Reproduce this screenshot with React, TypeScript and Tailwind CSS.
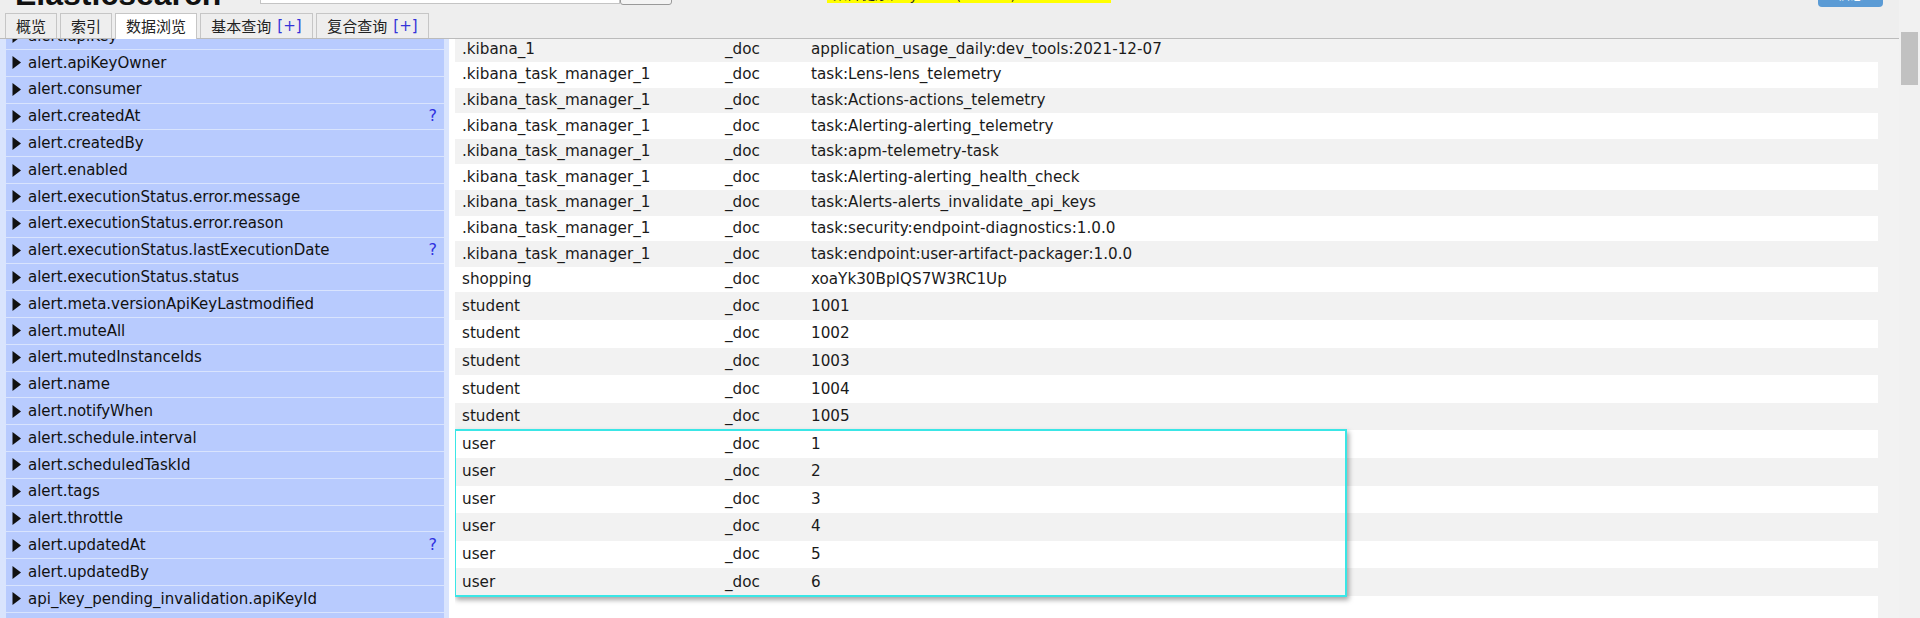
import React from 'react';

const sideFont = { fontFamily: '"DejaVu Sans", Verdana, sans-serif' };
const tableFont = { fontFamily: '"DejaVu Sans", Tahoma, sans-serif' };
const cjkFont = { fontFamily: '"Noto Sans CJK SC", "Noto Sans", sans-serif' };

const fields: { name: string; help?: boolean }[] = [
  { name: 'alert.apiKey' },
  { name: 'alert.apiKeyOwner' },
  { name: 'alert.consumer' },
  { name: 'alert.createdAt', help: true },
  { name: 'alert.createdBy' },
  { name: 'alert.enabled' },
  { name: 'alert.executionStatus.error.message' },
  { name: 'alert.executionStatus.error.reason' },
  { name: 'alert.executionStatus.lastExecutionDate', help: true },
  { name: 'alert.executionStatus.status' },
  { name: 'alert.meta.versionApiKeyLastmodified' },
  { name: 'alert.muteAll' },
  { name: 'alert.mutedInstanceIds' },
  { name: 'alert.name' },
  { name: 'alert.notifyWhen' },
  { name: 'alert.schedule.interval' },
  { name: 'alert.scheduledTaskId' },
  { name: 'alert.tags' },
  { name: 'alert.throttle' },
  { name: 'alert.updatedAt', help: true },
  { name: 'alert.updatedBy' },
  { name: 'api_key_pending_invalidation.apiKeyId' },
  { name: 'api_key_pending_invalidation.createdAt', help: true },
];

const docs: [string, string][] = [
  ['.kibana_1', 'application_usage_daily:dev_tools:2021-12-07'],
  ['.kibana_task_manager_1', 'task:Lens-lens_telemetry'],
  ['.kibana_task_manager_1', 'task:Actions-actions_telemetry'],
  ['.kibana_task_manager_1', 'task:Alerting-alerting_telemetry'],
  ['.kibana_task_manager_1', 'task:apm-telemetry-task'],
  ['.kibana_task_manager_1', 'task:Alerting-alerting_health_check'],
  ['.kibana_task_manager_1', 'task:Alerts-alerts_invalidate_api_keys'],
  ['.kibana_task_manager_1', 'task:security:endpoint-diagnostics:1.0.0'],
  ['.kibana_task_manager_1', 'task:endpoint:user-artifact-packager:1.0.0'],
  ['shopping', 'xoaYk30BpIQS7W3RC1Up'],
  ['student', '1001'],
  ['student', '1002'],
  ['student', '1003'],
  ['student', '1004'],
  ['student', '1005'],
  ['user', '1'],
  ['user', '2'],
  ['user', '3'],
  ['user', '4'],
  ['user', '5'],
  ['user', '6'],
];

function Tab({ label, plus, active, width }: { label: string; plus?: boolean; active?: boolean; width: string }) {
  return (
    <div
      className={`${width} flex items-center justify-center border border-b-0 border-[#c6c6c6] text-[15px] text-[#222] ${
        active ? 'bg-white h-[26px] -mb-px' : 'bg-[#eeeeee] h-[25px]'
      }`}
      style={cjkFont}
    >
      <span>{label}</span>
      {plus && (
        <span className="ml-[6px] text-[#3434d8]" style={sideFont}>
          [+]
        </span>
      )}
    </div>
  );
}

function Arrow() {
  return (
    <svg width="9" height="13" viewBox="0 0 9 13" className="shrink-0">
      <polygon points="0.5,0 9,6.5 0.5,13" fill="#111" />
    </svg>
  );
}

export default function App() {
  return (
    <div className="flex h-screen w-full overflow-hidden bg-white">
      <div className="flex flex-1 flex-col min-w-0">
        {/* Header */}
        <header className="h-[39px] shrink-0 bg-[#eeeeee] border-b border-[#bbbbbb]">
          <div className="flex h-[13px] items-start">
            <div className="w-[260px] pl-[15px] mt-[-22px] text-[32px] font-bold leading-none text-[#111]" style={{ fontFamily: '"Liberation Sans", Arial, sans-serif' }}>
              Elasticsearch
            </div>
            <div className="w-[360px] h-[24px] mt-[-20px] bg-white border border-[#c4c4c4] px-[22px] text-[13px] leading-[22px] text-[#333]" style={sideFont}>
              http://localhost:9200/
            </div>
            <div className="w-[52px] h-[24px] mt-[-19px] bg-[#f4f4f4] border border-[#9a9a9a] rounded-[3px]" />
            <div className="w-[155px]" />
            <div className="w-[284px] h-[20px] mt-[-17px] bg-[#ffff00] text-[14px] leading-[20px] px-[6px] text-[#222] overflow-hidden" style={cjkFont}>
              集群健康值: yellow (21 of 42)
            </div>
            <div className="flex-1" />
            <div className="w-[65px] h-[24px] mt-[-17px] bg-[#5b9bd5] rounded-[4px] text-white text-[13px] text-center leading-[22px]" style={cjkFont}>
              信息
            </div>
            <div className="w-[16px]" />
          </div>
          <div className="flex items-start gap-[3px] pl-[5px]">
            <Tab label="概览" width="w-[52px]" />
            <Tab label="索引" width="w-[52px]" />
            <Tab label="数据浏览" width="w-[82px]" active />
            <Tab label="基本查询" plus width="w-[113px]" />
            <Tab label="复合查询" plus width="w-[113px]" />
          </div>
        </header>

        <div className="flex flex-1 min-h-0">
          {/* Field sidebar */}
          <aside className="w-[449px] shrink-0 overflow-hidden bg-[#d9e4fd]" style={sideFont}>
            <div className="mt-[-16.8px]">
              {fields.map((f) => (
                <div key={f.name} className="mt-px ml-[6px] mr-[5px] h-[25.8px] flex items-center bg-[#b8cbfe] pl-[6px] pr-[7px] text-[15px] text-[#111]">
                  <Arrow />
                  <span className="ml-[7px] flex-1 whitespace-nowrap">{f.name}</span>
                  {f.help && <span className="text-[#2f2fe0] text-[16px]">?</span>}
                </div>
              ))}
            </div>
          </aside>

          <div className="w-[6px] shrink-0 bg-white" />

          {/* Results */}
          <main className="relative flex flex-1 min-w-0 overflow-hidden">
            <div className="flex-1 bg-white overflow-hidden" style={tableFont}>
              <div className="mt-[-2.6px]">
                {docs.map(([index, id], i) => (
                  <div
                    key={i}
                    className={`flex items-center text-[15.2px] text-[#1a1a1a] ${i < 10 ? 'h-[25.6px]' : 'h-[27.6px]'} ${
                      i % 2 === 0 ? 'bg-[#f2f2f2]' : 'bg-white'
                    }`}
                  >
                    <div className="w-[270px] pl-[7px] whitespace-nowrap">{index}</div>
                    <div className="w-[86px]">_doc</div>
                    <div className="flex-1 whitespace-nowrap">{id}</div>
                  </div>
                ))}
              </div>
            </div>
            <div className="w-[21px] shrink-0 bg-[#f2f2f2]" />

            {/* highlight box */}
            <div className="absolute left-[-1px] top-[389.6px] w-[893px] h-[168px] border-[2.5px] border-[#3ae6e6] shadow-[2px_3px_5px_rgba(0,0,0,0.35)] pointer-events-none" />
          </main>
        </div>
      </div>

      {/* Scrollbar */}
      <div className="w-[21px] shrink-0 bg-[#f1f1f1]">
        <div className="mt-[32px] mx-[2px] h-[53px] bg-[#c1c1c1]" />
      </div>
    </div>
  );
}
